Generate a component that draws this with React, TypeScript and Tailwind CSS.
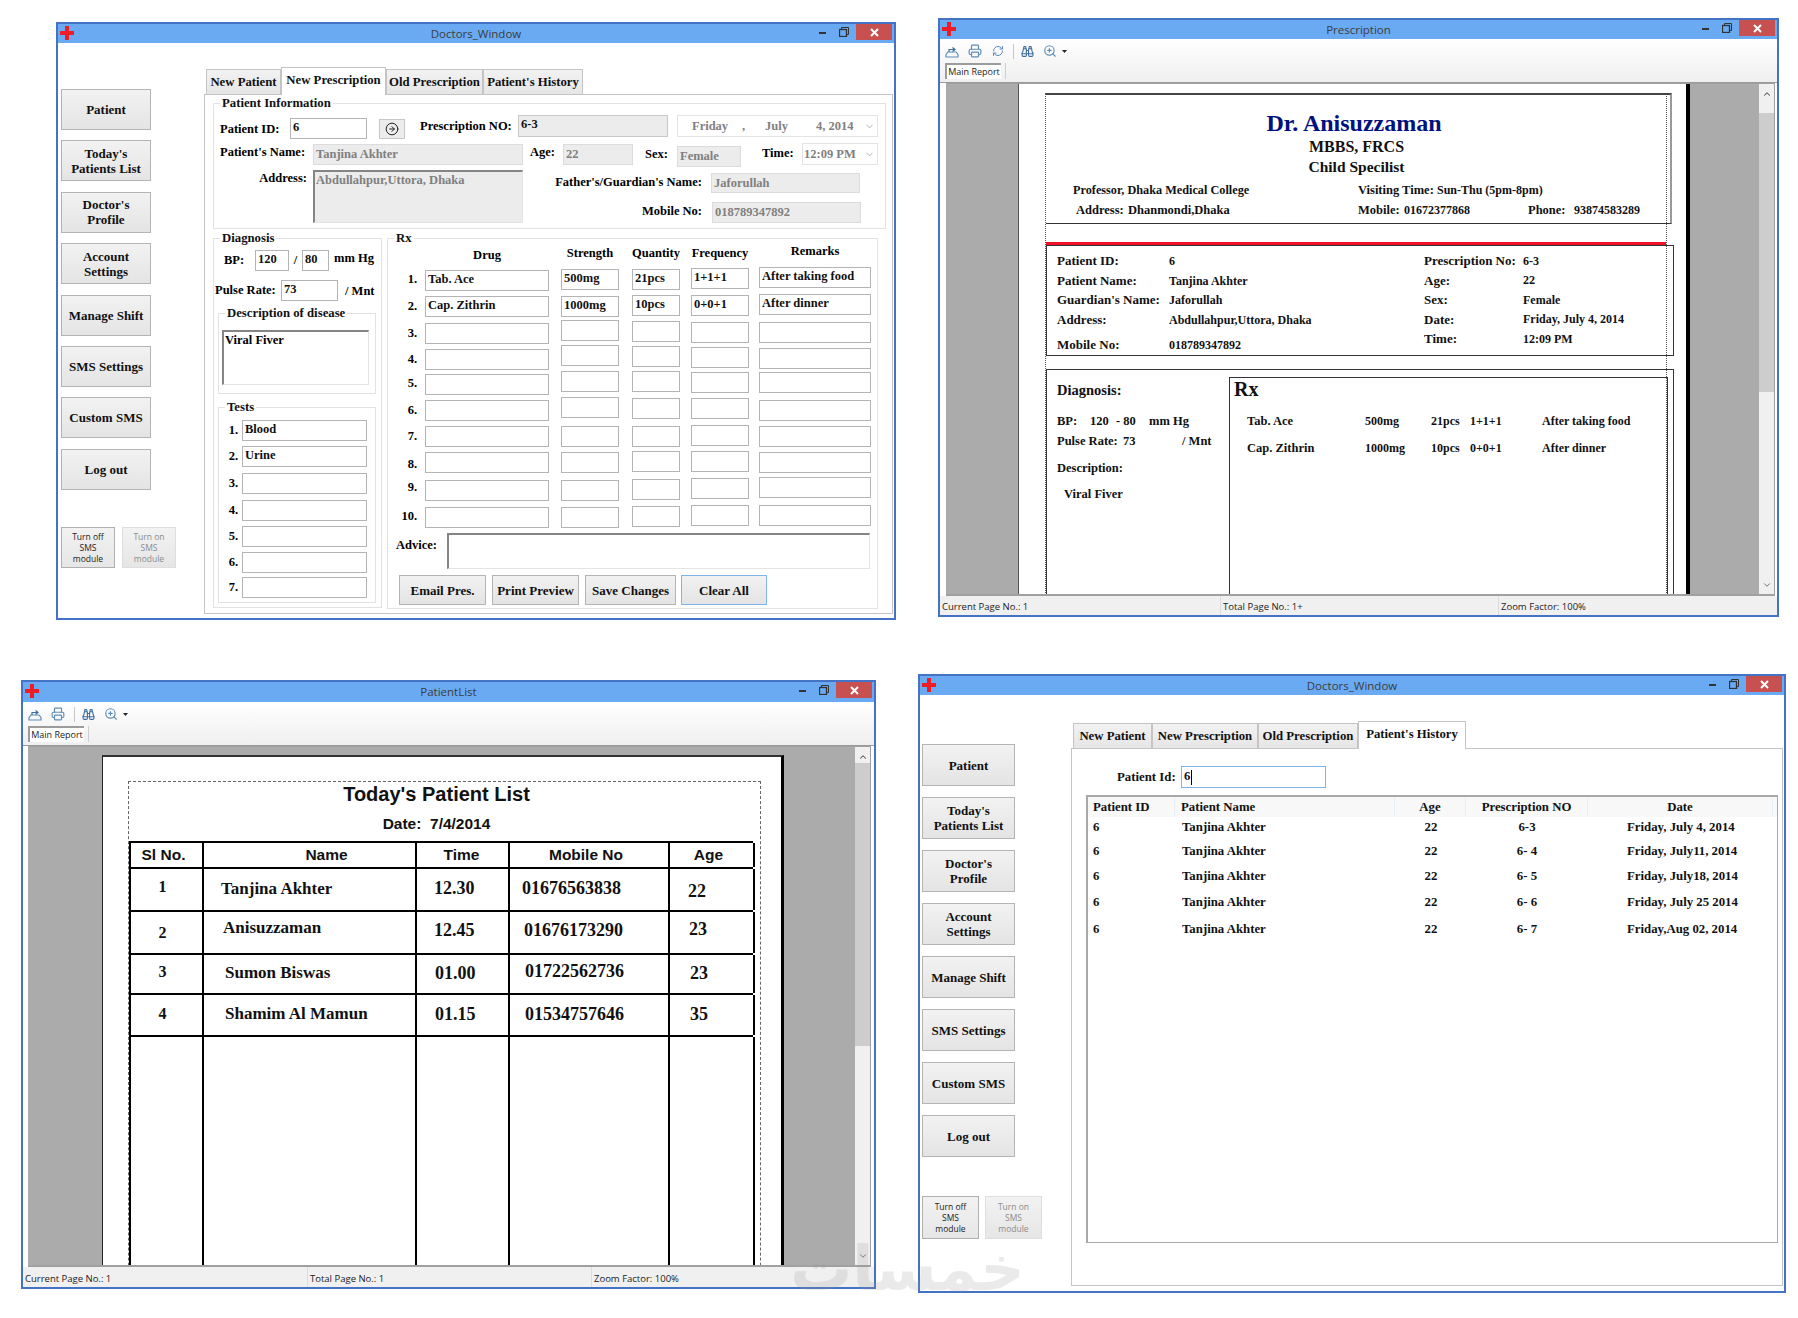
import React from "react";
import { ChevronDown, ChevronUp, CircleArrowRight, Printer, RefreshCw, Binoculars, ZoomIn } from "lucide-react";

const M: Record<number, string> = {
  0: "mt-0", 1: "mt-px", 2: "mt-0.5", 3: "mt-[3px]", 4: "mt-1", 5: "mt-[5px]", 6: "mt-1.5", 7: "mt-[7px]",
  8: "mt-2", 9: "mt-[9px]", 10: "mt-2.5", 11: "mt-[11px]", 12: "mt-3", 13: "mt-[13px]",
};

function Cross() {
  return (
    <svg width="14" height="14" viewBox="0 0 14 14" className="ml-[2px] mt-[2px]">
      <path d="M5 0h4v5h5v4H9v5H5V9H0V5h5z" fill="#ee1c25" />
    </svg>
  );
}

function Controls() {
  return (
    <div className="mr-0.5 flex items-start justify-end">
      <svg width="7" height="3" className="mt-[8px]"><rect width="7" height="2" fill="#333" /></svg>
      <svg width="10" height="10" viewBox="0 0 10 10" className="ml-[13px] mt-[3px]" fill="none" stroke="#333">
        <rect x="0.5" y="2.5" width="7" height="7" strokeWidth="1.3" />
        <path d="M2.5 2V.5h7v7H8" />
      </svg>
      <div className="ml-[7px] flex h-[16px] w-[36px] items-center justify-center bg-[#c75050]">
        <svg width="9" height="9" viewBox="0 0 9 9"><path d="M1 1l7 7M8 1L1 8" stroke="#fff" strokeWidth="2" /></svg>
      </div>
    </div>
  );
}

function Win({ pos, title, barH, children }: { pos: string; title: string; barH: string; children: React.ReactNode }) {
  return (
    <section className={`absolute flex flex-col border-2 border-[#4472c4] bg-white ${pos}`}>
      <header className={`grid grid-cols-[1fr_auto_1fr] bg-[#6aaaf2] ${barH}`}>
        <Cross />
        <span className="pt-px font-['Open_Sans',sans-serif] text-[11.5px] leading-[17px] text-[#3c3c3c]">{title}</span>
        <Controls />
      </header>
      {children}
    </section>
  );
}

function SideBtn({ cls, children }: { cls: string; children: React.ReactNode }) {
  return (
    <button className={`flex shrink-0 items-center justify-center border border-[#b4b4b4] bg-gradient-to-b from-[#f2f2f2] to-[#e4e4e4] text-center text-[13px] font-bold leading-[15px] text-[#111] ${cls}`}>
      {children}
    </button>
  );
}

function SmsBtn({ cls, dim, children }: { cls: string; dim?: boolean; children: React.ReactNode }) {
  return (
    <button className={`flex items-center justify-center border bg-gradient-to-b from-[#f2f2f2] to-[#e6e6e6] text-center font-['Open_Sans',sans-serif] text-[8.5px] leading-[11px] ${dim ? "border-[#dedede] text-[#8c8c8c]" : "border-[#b0b0b0] text-[#222]"} ${cls}`}>
      {children}
    </button>
  );
}

function Sidebar({ wrap, btn, sms, smsWrap, gap }: { wrap: string; btn: string; sms: string; smsWrap: string; gap: string }) {
  const names = [["Patient"], ["Today's", "Patients List"], ["Doctor's", "Profile"], ["Account", "Settings"], ["Manage Shift"], ["SMS Settings"], ["Custom SMS"], ["Log out"]];
  return (
    <aside className={`flex shrink-0 flex-col ${gap} ${wrap}`}>
      {names.map((n) => (
        <SideBtn key={n[0]} cls={btn}>
          <span>{n.map((l) => <span key={l} className="block">{l}</span>)}</span>
        </SideBtn>
      ))}
      <div className={`flex ${smsWrap}`}>
        <SmsBtn cls={sms}><span>Turn off<br />SMS<br />module</span></SmsBtn>
        <SmsBtn cls={sms} dim><span>Turn on<br />SMS<br />module</span></SmsBtn>
      </div>
    </aside>
  );
}

function Tabs({ items, active, widths }: { items: string[]; active: number; widths: string[] }) {
  return (
    <div className="relative z-10 flex items-end pl-[2px]">
      {items.map((t, i) => (
        <div
          key={t}
          className={`flex items-center justify-center border-l border-r border-t border-[#c4c4c4] text-[12.75px] font-bold leading-[16px] text-[#111] ${widths[i]} ${
            i === active ? "-mb-px h-[28px] bg-white pb-[3px]" : "h-[25px] bg-gradient-to-b from-[#f2f2f2] to-[#e6e6e6]"
          }`}
        >
          {t}
        </div>
      ))}
    </div>
  );
}

function Box({ cls, children }: { cls: string; children?: React.ReactNode }) {
  return <div className={`shrink-0 border border-[#b4b4b4] bg-white px-[2px] leading-[17px] text-[#111] ${cls}`}>{children}</div>;
}

function Off({ cls, children }: { cls: string; children?: React.ReactNode }) {
  return <div className={`shrink-0 border border-[#dcdcdc] bg-[#ececec] px-[2px] leading-[18px] text-[#808080] ${cls}`}>{children}</div>;
}

function Area({ cls, children }: { cls: string; children?: React.ReactNode }) {
  return <div className={`shrink-0 border-b border-l-2 border-r border-t-2 border-b-[#e4e4e4] border-l-[#858585] border-r-[#e4e4e4] border-t-[#858585] px-[1px] leading-[16px] ${cls}`}>{children}</div>;
}

function Group({ legend, cls, lg, children }: { legend: string; cls: string; lg?: string; children: React.ReactNode }) {
  return (
    <fieldset className={`min-w-0 shrink-0 border border-[#e2e2e2] ${cls}`}>
      <legend className={`ml-[6px] px-[2px] text-[12.75px] font-bold leading-[14px] text-[#111] ${lg ?? ""}`}>{legend}</legend>
      {children}
    </fieldset>
  );
}

function Column({ w, ml, title, gaps, values }: { w: string; ml: string; title: string; gaps: number[]; values: string[] }) {
  return (
    <div className={`flex shrink-0 flex-col ${w} ${ml}`}>
      <div className="h-[16px] whitespace-nowrap text-center leading-[16px]">{title}</div>
      {gaps.map((g, i) => (
        <Box key={i} cls={`h-[21px] w-full ${M[g]}`}>{values[i]}</Box>
      ))}
    </div>
  );
}

function DoctorsBody() {
  const blank = ["", "", "", "", "", "", "", "", "", ""];
  const numGaps = [11, 11, 10, 8, 11, 10, 12, 7, 13];
  const testGaps = [6, 5, 6, 6, 5, 5, 4];
  const tests = ["Blood", "Urine", "", "", "", "", ""];
  return (
    <div className="flex min-h-0 flex-1">
      <Sidebar wrap="w-[146px] pl-[3px] pt-[46px]" btn="h-[41px] w-[90px]" sms="h-[41px] w-[54px]" smsWrap="mt-[27px] gap-[7px]" gap="gap-[10.4px]" />
      <div className="flex flex-1 flex-col pb-[4px] pr-px pt-[24px]">
        <Tabs items={["New Patient", "New Prescription", "Old Prescription", "Patient's History"]} active={1} widths={["w-[75px]", "w-[105px]", "w-[97px]", "w-[100px]"]} />
        <div className="flex-1 border border-[#c4c4c4] pl-[8px] pt-px text-[12.5px] font-bold">
          <Group legend="Patient Information" cls="w-[673px]">
            <div className="flex h-[33px] items-start pt-[5px] leading-[16px]">
              <span className="ml-[6px] mt-1.5 w-[70px]">Patient ID:</span>
              <Box cls="mt-[3px] h-[21px] w-[77px]">6</Box>
              <div className="ml-[12px] mt-1 flex h-[20px] w-[26px] items-center justify-center border border-[#c8c8c8] bg-[#ececec]">
                <CircleArrowRight size={14} strokeWidth={1.7} color="#222" />
              </div>
              <span className="ml-[15px] mt-[3px] w-[98px] whitespace-nowrap">Prescription NO:</span>
              <Box cls="h-[22px] w-[150px] !border-[#c8c8c8] !bg-[#ececec]">6-3</Box>
              <div className="ml-[9px] flex h-[22px] w-[201px] items-center border border-[#e4e4e4] pl-[14px] leading-[20px] text-[#808080]">
                <span className="w-[50px]">Friday</span><span className="w-[23px]">,</span><span className="w-[51px]">July</span><span>4, 2014</span>
                <ChevronDown size={11} className="ml-auto mr-[2px]" color="#aaa" />
              </div>
            </div>
            <div className="flex h-[27px] items-start leading-[16px]">
              <span className="ml-[6px] mt-px w-[93px] whitespace-nowrap">Patient's Name:</span>
              <Off cls="mt-px h-[21px] w-[210px]">Tanjina Akhter</Off>
              <span className="ml-[7px] mt-px w-[33px]">Age:</span>
              <Off cls="mt-px h-[21px] w-[70px]">22</Off>
              <span className="ml-[12px] mt-[3px] w-[32px]">Sex:</span>
              <Off cls="mt-[3px] h-[21px] w-[64px]">Female</Off>
              <span className="ml-[21px] mt-0.5 w-[40px]">Time:</span>
              <div className="flex h-[22px] w-[76px] items-center border border-[#e4e4e4] pl-px leading-[20px] text-[#808080]">
                <span className="whitespace-nowrap">12:09 PM</span>
                <ChevronDown size={11} className="ml-auto mr-[2px]" color="#aaa" />
              </div>
            </div>
            <div className="flex h-[58px] items-start leading-[16px]">
              <span className="ml-[6px] w-[87px] text-right">Address:</span>
              <Area cls="ml-[6px] h-[53px] w-[210px] bg-[#ececec] text-[#808080]">Abdullahpur,Uttora, Dhaka</Area>
              <div className="flex flex-col">
                <div className="mt-[3px] flex">
                  <span className="w-[179px] whitespace-nowrap pt-px text-right">Father's/Guardian's Name:</span>
                  <Off cls="ml-[9px] h-[20px] w-[149px]">Jaforullah</Off>
                </div>
                <div className="mt-[9px] flex">
                  <span className="w-[179px] pt-px text-right">Mobile No:</span>
                  <Off cls="ml-[10px] h-[21px] w-[149px]">018789347892</Off>
                </div>
              </div>
            </div>
          </Group>

          <div className="mt-0.5 flex gap-[5px]">
            <Group legend="Diagnosis" cls="h-[377px] w-[169px]">
              <div className="flex h-[30px] items-start leading-[16px]">
                <span className="ml-[10px] mt-[7px] w-[31px]">BP:</span>
                <Box cls="mt-[5px] h-[21px] w-[34px]">120</Box>
                <span className="mt-[7px] w-[13px] text-center">/</span>
                <Box cls="mt-[5px] h-[21px] w-[27px]">80</Box>
                <span className="ml-[5px] mt-[5px] whitespace-nowrap">mm Hg</span>
              </div>
              <div className="flex h-[31px] items-start leading-[16px]">
                <span className="ml-px mt-[7px] w-[66px] whitespace-nowrap">Pulse Rate:</span>
                <Box cls="mt-[5px] h-[21px] w-[57px]">73</Box>
                <span className="ml-[7px] mt-[8px] whitespace-nowrap">/ Mnt</span>
              </div>
              <Group legend="Description of disease" cls="ml-1 h-[88px] w-[158px]">
                <Area cls="ml-[3px] mt-2.5 h-[55px] w-[147px]">Viral Fiver</Area>
              </Group>
              <Group legend="Tests" cls="ml-1 mt-1.5 h-[203px] w-[158px]">
                {tests.map((t, i) => (
                  <div key={i} className={`flex ${M[testGaps[i]]}`}>
                    <span className="w-[23px] pr-[4px] text-right leading-[21px]">{i + 1}.</span>
                    <Box cls="h-[21px] w-[125px]">{t}</Box>
                  </div>
                ))}
              </Group>
            </Group>

            <Group legend="Rx" cls="h-[378px] w-[491px]">
              <div className="flex h-[288px]">
                <div className="flex w-[37px] shrink-0 flex-col pt-[26px] text-right">
                  <span className="pr-[8px] leading-[16px]">1.</span>
                  {numGaps.map((g, i) => (
                    <span key={i} className={`pr-[8px] leading-[16px] ${M[g]}`}>{i + 2}.</span>
                  ))}
                </div>
                <Column w="w-[124px]" ml="pt-0.5" title="Drug" gaps={[7, 5, 6, 5, 4, 5, 5, 5, 7, 6]} values={["Tab. Ace", "Cap. Zithrin", ...blank]} />
                <Column w="w-[58px]" ml="ml-[12px]" title="Strength" gaps={[8, 6, 3, 4, 5, 5, 8, 5, 7, 6]} values={["500mg", "1000mg", ...blank]} />
                <Column w="w-[48px]" ml="ml-[13px]" title="Quantity" gaps={[8, 5, 5, 4, 4, 6, 7, 4, 7, 6]} values={["21pcs", "10pcs", ...blank]} />
                <Column w="w-[58px]" ml="ml-[11px]" title="Frequency" gaps={[7, 6, 6, 4, 4, 5, 6, 5, 6, 6]} values={["1+1+1", "0+0+1", ...blank]} />
                <Column w="w-[112px]" ml="ml-[10px] -mt-0.5" title="Remarks" gaps={[8, 6, 7, 5, 3, 7, 5, 5, 4, 7]} values={["After taking food", "After dinner", ...blank]} />
              </div>
              <div className="flex">
                <span className="ml-2 mt-1 w-[51px] leading-[16px]">Advice:</span>
                <Area cls="h-[36px] w-[423px]" />
              </div>
              <div className="ml-[11px] mt-1.5 flex">
                <SideBtn cls="h-[30px] w-[87px]">Email Pres.</SideBtn>
                <SideBtn cls="ml-1.5 h-[30px] w-[87px]">Print Preview</SideBtn>
                <SideBtn cls="ml-1.5 h-[30px] w-[91px]">Save Changes</SideBtn>
                <SideBtn cls="ml-[5px] h-[30px] w-[86px] !border-[#7eb4ea]">Clear All</SideBtn>
              </div>
            </Group>
          </div>
        </div>
      </div>
    </div>
  );
}

function Toolbar({ refresh }: { refresh?: boolean }) {
  const c = "#5f8db9";
  return (
    <div className="flex h-[44px] shrink-0 flex-col border-b border-[#9a9a9a] bg-gradient-to-b from-white to-[#efefef]">
      <div className="flex h-[24px] items-center pl-[5px]">
        <svg width="14" height="14" viewBox="0 0 14 14" fill="none" stroke={c} strokeWidth="1.2">
          <path d="M1 13h12v-2.5l-2-2.5H3L1 10.5z" />
          <path d="M4 8V5.5h5M7.5 3.5L10 5.5 7.5 7.5" stroke="#3f6f9f" />
        </svg>
        <Printer size={14} color={c} className="ml-[9px]" />
        {refresh && <RefreshCw size={12} color={c} className="ml-[10px]" />}
        <span className="ml-[9px] h-[15px] w-px bg-[#c8c8c8]" />
        <Binoculars size={13} color="#3f6f9f" className="ml-[7px]" />
        <ZoomIn size={14} color={c} className="ml-[9px]" />
        <svg width="5" height="3" className="ml-[5px]"><path d="M0 0h5L2.5 3z" fill="#222" /></svg>
      </div>
      <div className="flex items-start pl-[5px]">
        <div className="flex h-[16px] w-[56px] items-center justify-center whitespace-nowrap border-l-2 border-t-2 border-[#9c9c9c] bg-white font-['Open_Sans',sans-serif] text-[9px] leading-[12px] text-[#222]">
          Main Report
        </div>
        <span className="ml-[4px] h-[16px] w-px bg-[#cfcfcf]" />
      </div>
    </div>
  );
}

function Status({ a, b }: { a: string; b: string }) {
  const t = "flex items-center pl-[2px] pt-[4px] font-['Open_Sans',sans-serif] text-[9.5px] text-[#222] border-r border-[#dcdcdc]";
  return (
    <footer className={`flex shrink-0 bg-[#f0f0f0] ${a}`}>
      {b === "1" ? (
        <>
          <div className={`${t} w-[285px]`}>Current Page No.: 1</div>
          <div className={`${t} w-[284px]`}>Total Page No.: 1</div>
        </>
      ) : (
        <>
          <div className={`${t} w-[281px]`}>Current Page No.: 1</div>
          <div className={`${t} w-[278px]`}>Total Page No.: 1+</div>
        </>
      )}
      <div className="flex items-center pl-[2px] pt-[4px] font-['Open_Sans',sans-serif] text-[9.5px] text-[#222]">Zoom Factor: 100%</div>
    </footer>
  );
}

function Scroll({ upH, thumb }: { upH: string; thumb: string }) {
  return (
    <div className="flex w-[15px] shrink-0 flex-col bg-[#f0f0f0]">
      <div className={`flex justify-center pt-[5px] ${upH}`}><ChevronUp size={10} strokeWidth={2.5} color="#555" /></div>
      <div className={`bg-[#cdcdcd] ${thumb}`} />
      <div className="flex flex-1 items-end justify-center pb-[4px]"><ChevronDown size={10} strokeWidth={2} color="#555" /></div>
    </div>
  );
}

function PrescriptionBody() {
  const left = [["Patient ID:", "6"], ["Patient Name:", "Tanjina Akhter"], ["Guardian's Name:", "Jaforullah"], ["Address:", "Abdullahpur,Uttora, Dhaka"]];
  const right = [["Prescription No:", "6-3"], ["Age:", "22"], ["Sex:", "Female"], ["Date:", "Friday, July 4, 2014"], ["Time:", "12:09 PM"]];
  const rx = [["Tab. Ace", "500mg", "21pcs", "1+1+1", "After taking food"], ["Cap. Zithrin", "1000mg", "10pcs", "0+0+1", "After dinner"]];
  const v = "text-[12px]";
  return (
    <>
      <Toolbar refresh />
      <div className="ml-1.5 mr-0.5 flex min-h-0 flex-1 overflow-hidden border-b-2 border-r border-t border-[#a0a0a0] bg-[#ababab]">
        <div className="w-[72px] shrink-0" />
        <div className="w-[672px] shrink-0 overflow-hidden border-l border-r-4 border-l-[#555] border-r-black bg-white pl-[26px] pt-[9px] text-[12.5px] font-bold text-[#111]">
          <div className="h-[600px] w-[622px] border-l border-r border-dotted border-[#555]">
            <div className="h-[131px] w-[626px] border-b border-r-2 border-t-2 border-b-[#333] border-r-[#999] border-t-[#444] border-t-dotted">
              <div className="flex flex-col items-center pr-[3px] pt-[15px]">
                <div className="mr-[5px] text-[24px] leading-[27px] text-[#00107f]">Dr. Anisuzzaman</div>
                <div className="text-[16px] leading-[20px]">MBBS, FRCS</div>
                <div className="text-[15.5px] leading-[19px]">Child Specilist</div>
              </div>
              <div className="mt-1 flex h-[20px] items-center whitespace-nowrap">
                <span className="ml-[27px] w-[285px] text-[12.25px]">Professor, Dhaka Medical College</span>
                <span className="w-[79px]">Visiting Time:</span>
                <span className={v}>Sun-Thu (5pm-8pm)</span>
              </div>
              <div className="flex h-[20px] items-center whitespace-nowrap">
                <span className="ml-[30px] w-[52px]">Address:</span>
                <span className="w-[230px]">Dhanmondi,Dhaka</span>
                <span className="w-[46px]">Mobile:</span>
                <span className={`w-[124px] ${v}`}>01672377868</span>
                <span className="w-[46px]">Phone:</span>
                <span className={v}>93874583289</span>
              </div>
            </div>
            <div className="mt-[18px] h-[3px] bg-[#ee1128]" />
            <div className="flex h-[111px] w-[628px] border border-[#333] pl-[10px] pt-[5px] text-[13px]">
              <div className="w-[367px]">
                {left.map(([k, val]) => (
                  <div key={k} className="flex h-[19.7px] items-center whitespace-nowrap"><span className="w-[112px]">{k}</span><span className={v}>{val}</span></div>
                ))}
                <div className="mt-[5px] flex h-[20px] items-center"><span className="w-[112px]">Mobile No:</span><span className={v}>018789347892</span></div>
              </div>
              <div>
                {right.map(([k, val]) => (
                  <div key={k} className="flex h-[19.5px] items-center whitespace-nowrap"><span className="w-[99px]">{k}</span><span className={v}>{val}</span></div>
                ))}
              </div>
            </div>
            <div className="mt-[13px] flex h-[300px] w-[628px] border-l border-r border-t border-[#333]">
              <div className="w-[182px] shrink-0 pl-[10px] pt-[10px]">
                <div className="text-[14.5px] leading-[20px]">Diagnosis:</div>
                <div className="mt-[11px] flex h-[20px] items-center whitespace-nowrap"><span className="w-[33px]">BP:</span><span className="w-[26px]">120</span><span className="w-[33px]">- 80</span><span>mm Hg</span></div>
                <div className="flex h-[20px] items-center whitespace-nowrap"><span className="w-[66px]">Pulse Rate:</span><span className="w-[59px]">73</span><span>/ Mnt</span></div>
                <div className="mt-[7px] leading-[20px]">Description:</div>
                <div className="ml-[7px] mt-1.5 leading-[20px]">Viral Fiver</div>
              </div>
              <div className="mt-[7px] h-[300px] w-[439px] border-l border-r border-t border-[#333] pl-[4px]">
                <div className="-mt-px text-[20px] leading-[24px]">Rx</div>
                {rx.map((r, i) => (
                  <div key={r[0]} className={`flex h-[20px] items-center whitespace-nowrap text-[12px] ${i === 0 ? "mt-[10px]" : "mt-[7px]"}`}>
                    <span className="ml-[13px] w-[118px] text-[12.5px]">{r[0]}</span>
                    <span className="w-[66px]">{r[1]}</span>
                    <span className="w-[39px]">{r[2]}</span>
                    <span className="w-[72px]">{r[3]}</span>
                    <span>{r[4]}</span>
                  </div>
                ))}
              </div>
            </div>
          </div>
        </div>
        <div className="flex-1" />
        <Scroll upH="h-[29px]" thumb="h-[279px]" />
      </div>
      <Status a="h-[19px]" b="1+" />
    </>
  );
}

function ListBody() {
  const cols = "grid grid-cols-[73px_213px_93px_160px_85px]";
  const heads = [["Sl No.", "pr-1.5"], ["Name", "pl-[34px]"], ["Time", "pr-0.5"], ["Mobile No", "pr-1.5"], ["Age", "pr-1.5"]];
  const rows = [
    { h: "h-[43px]", c: ["1", "Tanjina Akhter", "12.30", "01676563838", "22"], p: ["pt-1.5", "pt-2 pl-[17px]", "pt-[7px] pl-[17px]", "pt-[7px] pl-3", "pt-2.5 pl-[18px]"] },
    { h: "h-[43px]", c: ["2", "Anisuzzaman", "12.45", "01676173290", "23"], p: ["pt-[9px]", "pt-1 pl-[19px]", "pt-1.5 pl-[17px]", "pt-1.5 pl-[14px]", "pt-[5px] pl-[19px]"] },
    { h: "h-[40px]", c: ["3", "Sumon Biswas", "01.00", "01722562736", "23"], p: ["pt-[5px]", "pt-1.5 pl-[21px]", "pt-1.5 pl-[18px]", "pt-1 pl-[15px]", "pt-1.5 pl-[20px]"] },
    { h: "h-[42px]", c: ["4", "Shamim Al Mamun", "01.15", "01534757646", "35"], p: ["pt-[7px]", "pt-[7px] pl-[21px]", "pt-[7px] pl-[18px]", "pt-[7px] pl-[15px]", "pt-[7px] pl-[20px]"] },
  ];
  const size = (i: number) => (i === 0 ? "pr-2 text-center text-[16px]" : i === 1 ? "text-[17px]" : "text-[18px]");
  return (
    <>
      <Toolbar />
      <div className="ml-[5px] mr-[3px] flex min-h-0 flex-1 overflow-hidden border-b-2 border-r border-t border-[#a0a0a0] bg-[#ababab]">
        <div className="w-[74px] shrink-0" />
        <div className="mt-2 h-[600px] w-[682px] shrink-0 border-l border-r-[3px] border-t-2 border-l-[#222] border-r-black border-t-[#333] bg-white pl-[25px] pt-6">
          <div className="h-[600px] w-[633px] border-l border-r border-t border-dashed border-[#666]">
            <div className="pr-[16px] text-center font-['Liberation_Sans',sans-serif] font-bold text-[#111]">
              <div className="text-[20px] leading-[24px]">Today's Patient List</div>
              <div className="mt-2 text-[15.5px] leading-[20px]">Date:&nbsp; 7/4/2014</div>
            </div>
            <div className="mt-[7px] w-[624px] border-l-2 border-t-2 border-black font-bold text-[#111]">
              <div className={`${cols} h-[26px] border-b-2 border-black font-['Liberation_Sans',sans-serif] text-[15.5px] leading-[24px]`}>
                {heads.map(([t, c]) => (
                  <div key={t} className={`border-r-2 border-black text-center ${c}`}>{t}</div>
                ))}
              </div>
              {rows.map((r) => (
                <div key={r.c[0]} className={`${cols} ${r.h} border-b-2 border-black leading-[24px]`}>
                  {r.c.map((t, i) => (
                    <div key={i} className={`whitespace-nowrap border-r-2 border-black ${r.p[i]} ${size(i)}`}>{t}</div>
                  ))}
                </div>
              ))}
              <div className={`${cols} h-[240px]`}>
                {[0, 1, 2, 3, 4].map((i) => <div key={i} className="border-r-2 border-black" />)}
              </div>
            </div>
          </div>
        </div>
        <div className="flex-1" />
        <Scroll upH="h-[16px]" thumb="h-[283px]" />
      </div>
      <Status a="h-[20px]" b="1" />
    </>
  );
}

function HistoryBody() {
  const rows = [
    { h: "h-[22px]", p: "6-3", d: "Friday, July 4, 2014" },
    { h: "h-[26px]", p: "6- 4", d: "Friday, July11, 2014" },
    { h: "h-[24px]", p: "6- 5", d: "Friday, July18, 2014" },
    { h: "h-[28px]", p: "6- 6", d: "Friday, July 25 2014" },
    { h: "h-[26px]", p: "6- 7", d: "Friday,Aug 02, 2014" },
  ];
  const cols = "grid grid-cols-[87px_220px_71px_122px_185px]";
  return (
    <div className="flex min-h-0 flex-1">
      <Sidebar wrap="w-[151px] pl-0.5 pt-[49px]" btn="h-[42px] w-[93px]" sms="h-[43px] w-[57px]" smsWrap="mt-[28px] gap-1.5" gap="gap-[11px]" />
      <div className="flex flex-1 flex-col pb-[5px] pr-px pt-[26px]">
        <Tabs items={["New Patient", "New Prescription", "Old Prescription", "Patient's History"]} active={3} widths={["w-[79px]", "w-[106px]", "w-[100px]", "w-[108px]"]} />
        <div className="flex-1 border border-[#c4c4c4] pt-[17px] text-[12.8px] font-bold text-[#111]">
          <div className="flex items-center">
            <span className="ml-[45px] w-[64px] whitespace-nowrap pt-px">Patient Id:</span>
            <div className="flex h-[22px] w-[145px] items-center border border-[#7eb4ea] pl-[2px]">6<span className="ml-px h-[15px] w-px bg-black" /></div>
          </div>
          <div className="ml-[14px] mt-[7px] h-[448px] w-[692px] border-b border-l-2 border-r border-t-2 border-[#a8a8a8]">
            <div className={`${cols} h-[20px] bg-[#f8f8f8] leading-[20px]`}>
              <div className="border-r border-[#e6eef6] pl-[5px]">Patient ID</div>
              <div className="border-r border-[#e6eef6] pl-[6px]">Patient Name</div>
              <div className="border-r border-[#e6eef6] text-center">Age</div>
              <div className="border-r border-[#e6eef6] text-center">Prescription NO</div>
              <div className="border-r border-[#e6eef6] text-center">Date</div>
            </div>
            {rows.map((r) => (
              <div key={r.p} className={`${cols} ${r.h} items-center`}>
                <div className="pl-[5px]">6</div>
                <div className="pl-[7px]">Tanjina Akhter</div>
                <div className="pl-px text-center">22</div>
                <div className="text-center">{r.p}</div>
                <div className="whitespace-nowrap pl-[39px]">{r.d}</div>
              </div>
            ))}
          </div>
        </div>
      </div>
    </div>
  );
}

export default function App() {
  return (
    <div className="relative h-[1318px] w-[1798px] overflow-hidden bg-white font-['Liberation_Serif',serif]">
      <Win pos="left-[56px] top-[22px] h-[598px] w-[840px]" title="Doctors_Window" barH="h-[19px]"><DoctorsBody /></Win>
      <Win pos="left-[938px] top-[18px] h-[599px] w-[841px]" title="Prescription" barH="h-[19px]"><PrescriptionBody /></Win>
      <Win pos="left-[21px] top-[680px] h-[609px] w-[855px]" title="PatientList" barH="h-[20px]"><ListBody /></Win>
      <Win pos="left-[918px] top-[674px] h-[619px] w-[868px]" title="Doctors_Window" barH="h-[19px]"><HistoryBody /></Win>
      <div dir="rtl" className="pointer-events-none absolute left-[790px] top-[1241px] font-['DejaVu_Sans',sans-serif] text-[62px] font-bold leading-[56px] text-[#9a9a9a] opacity-20">
        خمسات
      </div>
    </div>
  );
}
